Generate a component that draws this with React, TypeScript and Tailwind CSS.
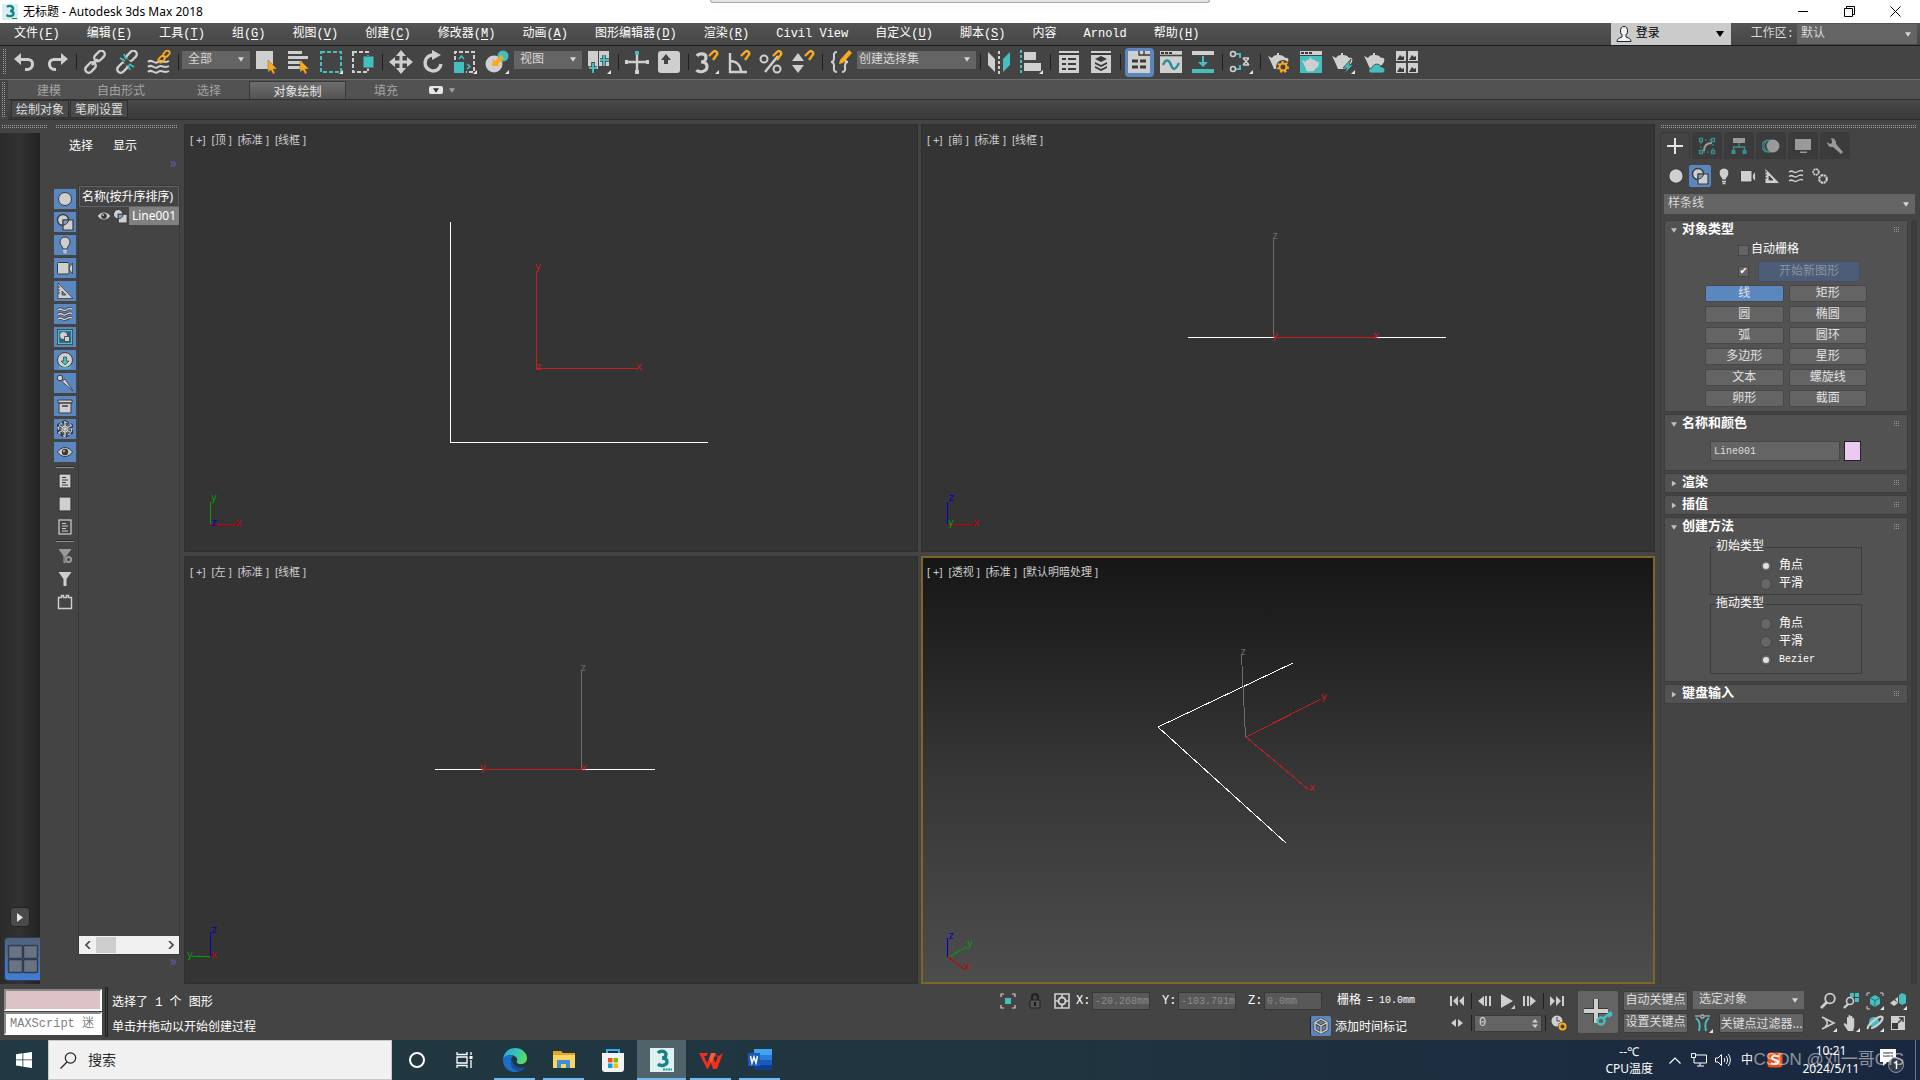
import type { ReactNode } from 'react'
import clsx from 'clsx'

const G = '#cfcfcf'
const T = '#43bfc0'
const O = '#fbaa1e'
const D = '#3a3a3a'

type IconProps = { children: ReactNode; className?: string; box?: string }

const Svg = ({ children, className = 'size-6', box = '0 0 24 24' }: IconProps) => (
  <svg viewBox={box} className={clsx('shrink-0', className)} fill="none" aria-hidden="true">
    {children}
  </svg>
)

const Corner = () => <path d="M24 20v4h-4z" fill="#e8e8e8" />
const Cursor = () => (
  <path d="M13 10v12l3-2 2 4 2-1-2-4h4z" fill={O} stroke="#6b5220" strokeWidth=".4" />
)
const Magnet = ({ x = 0 }: { x?: number }) => (
  <path
    transform={`translate(${x} 0)`}
    d="M13 6l4-4c2-2 5 0 4 2.5L17 10"
    stroke={O}
    strokeWidth="2.4"
  />
)
const Teapot = ({ fill = G }: { fill?: string }) => (
  <path
    d="M1 6l4 2c1-2 3-3 5-3V3h2v2c3 0 5 1 6 3 3-1 4 1 3 4-1 2-2 3-4 4l-2 3H7L4 12z"
    fill={fill}
  />
)
const Chain = ({ cut = false }: { cut?: boolean }) => (
  <g stroke={G} strokeWidth="2.4">
    <rect x="10.5" y="2.5" width="12" height="7" rx="3.5" transform="rotate(-45 16.5 6)" />
    <rect x="1.5" y="14" width="12" height="7" rx="3.5" transform="rotate(-45 7.5 17.5)" />
    {cut ? (
      <>
        <path d="M6 6l12 12" stroke="#444" strokeWidth="5" />
        <path d="M5 8l5 3M9 4l2 5M14 14l5 3M13 15l2 5" stroke={T} strokeWidth="1.8" />
      </>
    ) : (
      <path d="M9 15l6-6" />
    )}
  </g>
)

const UndoIcon = () => (
  <Svg>
    <path d="M8 3v5h6c4 0 7 2 7 6s-3 7-7 7h-2v-3h2c2 0 4-1 4-4s-2-3-4-3H8v4L1 9z" fill={G} />
  </Svg>
)
const RedoIcon = () => (
  <Svg>
    <path d="M16 3v5h-6c-4 0-7 2-7 6s3 7 7 7h1v-3h-1c-2 0-4-1-4-4s2-3 4-3h6v4l7-6z" fill={G} />
  </Svg>
)
const BindIcon = () => (
  <Svg>
    <path
      d="M1 12c4-4 6 3 10 0s6 2 11-1M1 17c4-4 6 3 10 0s6 2 11-1M1 22c4-4 6 3 10 0s6 2 11-1"
      stroke={G}
      strokeWidth="2"
    />
    <g stroke={O} strokeWidth="1.8">
      <rect x="16" y="1.5" width="7" height="4.5" rx="2.2" transform="rotate(-45 19.5 3.7)" />
      <rect x="11" y="7" width="7" height="4.5" rx="2.2" transform="rotate(-45 14.5 9.2)" />
    </g>
  </Svg>
)
const SelectIcon = () => (
  <Svg>
    <rect x="1" y="1" width="17" height="18" fill={G} />
    <Cursor />
  </Svg>
)
const SelectNameIcon = () => (
  <Svg>
    <path d="M1 1h14v3H1zM1 6h20v3H1zM1 11h14v3H1zM1 16h12v3H1z" fill={G} />
    <Cursor />
  </Svg>
)
const RectRegionIcon = () => (
  <Svg>
    <rect x="2" y="2" width="20" height="20" stroke={T} strokeWidth="2" strokeDasharray="4 2" />
    <Corner />
  </Svg>
)
const WindowCrossIcon = () => (
  <Svg>
    <rect x="2" y="2" width="15" height="20" stroke={G} strokeWidth="2" strokeDasharray="4 2" />
    <rect x="12" y="6" width="11" height="12" fill={T} stroke="#444" />
  </Svg>
)
const MoveIcon = () => (
  <Svg>
    <path
      d="M12 0l5 6h-3.500v4.500H18V7l6 5-6 5v-3.500h-4.500V18H17l-5 6-5-6h3.500v-4.500H6V17l-6-5 6-5v3.500h4.500V6H7z"
      fill={G}
    />
  </Svg>
)
const RotateIcon = () => (
  <Svg>
    <path d="M13 5a8 8 0 1 0 7 9" stroke={G} strokeWidth="3.400" />
    <path d="M11 0l9 5-9 5z" fill={G} />
  </Svg>
)
const ScaleIcon = () => (
  <Svg>
    <path d="M2 10V2h19v20h-8" stroke={G} strokeWidth="2" strokeDasharray="4 2" />
    <rect x="1" y="12" width="10" height="11" fill={T} />
    <path d="M6 9l2.500-3L11 9M14 14l3 2.500-3 2.500" stroke={T} strokeWidth="1.6" />
    <Corner />
  </Svg>
)
const PlaceIcon = () => (
  <Svg>
    <circle cx="9" cy="14" r="8.500" fill={G} />
    <circle cx="18" cy="6" r="5.500" fill={T} />
    <path d="M7 16l1-7 2 2 6-6 3 3-6 6 1 2z" fill={O} />
    <Corner />
  </Svg>
)
const PivotIcon = () => (
  <Svg>
    <path d="M1 1h10v18H1zM12 1h10v15H12z" fill={G} />
    <path d="M6 12v11M1 18h9M17 5v11M13 10h9" stroke="#444" strokeWidth="3.600" />
    <path d="M6 13v10M2 18h8M17 5v11M13 10h9" stroke={T} strokeWidth="2" />
    <Corner />
  </Svg>
)
const ManipIcon = () => (
  <Svg>
    <path d="M12 5v17M1 12h22" stroke={G} strokeWidth="2.400" />
    <path d="M10 20h4v4h-4zM0 10h3v4H0zM21 10h3v4h-3z" fill={G} />
    <path d="M10 1h4v4h-4z" fill={T} />
  </Svg>
)
const KeyOverrideIcon = () => (
  <Svg>
    <rect x="1" y="1" width="22" height="22" rx="3" fill={G} />
    <path d="M9 4l5 6h-3v4H7v-4H4z" fill="#444" />
  </Svg>
)
const SnapIcon = () => (
  <Svg>
    <path
      d="M2 6c2-3 9-3 9 1.500C11 10 9 12 6 12c3 0 6 1 6 4.500C12 22 4 23 1.500 20"
      stroke={G}
      strokeWidth="3.200"
    />
    <Magnet x={1} />
    <Corner />
  </Svg>
)
const AngleSnapIcon = () => (
  <Svg>
    <path d="M3 3v19h17M3 11c7 0 11 5 11 11" stroke={G} strokeWidth="2.400" />
    <Magnet x={1} />
  </Svg>
)
const PercentSnapIcon = () => (
  <Svg>
    <circle cx="5" cy="9" r="3.500" stroke={G} strokeWidth="2" />
    <circle cx="18" cy="19" r="3.500" stroke={G} strokeWidth="2" />
    <path d="M19 6L6 22" stroke={G} strokeWidth="2.400" />
    <Magnet x={1} />
  </Svg>
)
const SpinnerSnapIcon = () => (
  <Svg>
    <path d="M7 3l6 8H1zM7 23l6-8H1z" fill={G} />
    <Magnet x={1} />
  </Svg>
)
const SetsIcon = () => (
  <Svg>
    <path
      d="M8 2C4 2 5 5 5 8s-1 4-3 4c2 0 3 1 3 4s-1 6 3 6M13 22c4 0 3-3 3-6s1-4 3-4c-2 0-3-1-3-3"
      stroke={G}
      strokeWidth="2"
    />
    <path d="M20 0l3 3-9 10-4 1 1-4z" fill={O} />
  </Svg>
)
const MirrorIcon = () => (
  <Svg>
    <path d="M1 2l7 7v13l-7-7z" fill={G} />
    <path d="M12 1v23" stroke={G} strokeWidth="2" strokeDasharray="3 2" />
    <path d="M23 2l-7 7v13l7-7z" fill={T} />
  </Svg>
)
const AlignIcon = () => (
  <Svg>
    <path d="M2 0v24" stroke={T} strokeWidth="2" strokeDasharray="3 2" />
    <path d="M5 2h12v8H5zM5 13h17v8H5z" fill={G} />
    <Corner />
  </Svg>
)
const SceneListIcon = () => (
  <Svg>
    <path d="M2 1h20v22H2z" fill={G} />
    <path d="M2 4h20M5 9h4M5 14h4M5 19h4M11 9h8M11 14h8M11 19h8" stroke={D} strokeWidth="2" />
  </Svg>
)
const LayersIcon = () => (
  <Svg>
    <path d="M2 1h20v22H2z" fill={G} />
    <path d="M2 4h20" stroke={D} strokeWidth="2" />
    <path d="M12 6l6 3-6 3-6-3zM6 12l6 3 6-3v2l-6 3-6-3zM6 16l6 3 6-3v2l-6 3-6-3z" fill={D} />
  </Svg>
)
const RibbonIcon = () => (
  <Svg>
    <path d="M1 1h22v22H1z" fill={G} />
    <path d="M12 1v4h11M17 1v4" stroke={D} strokeWidth="1.4" />
    <path d="M5 11h6M13 11h6M5 17h6M13 17h6" stroke={D} strokeWidth="3" />
  </Svg>
)
const CurveIcon = () => (
  <Svg>
    <path d="M1 1h22v22H1z" fill={G} />
    <path d="M1 5.500h22" stroke="#444" strokeWidth="1.6" />
    <path d="M2 2h3v2H2zM6 2h3v2H6zM10 2h3v2h-3z" fill={D} />
    <path d="M4 15c3-7 6-5 8 0s4 6 8-2" stroke="#2d8f92" strokeWidth="2.400" />
  </Svg>
)
const SchematicIcon = () => (
  <Svg>
    <path d="M1 1h22v4H1z" fill={G} />
    <path d="M1 19h22v4H1zM11 6h2v6h4l-5 5-5-5h4z" fill={T} />
  </Svg>
)
const SlateIcon = () => (
  <Svg>
    <g stroke={G} strokeWidth="1.600">
      <circle cx="4" cy="4" r="2.500" />
      <circle cx="4" cy="19" r="2.500" />
      <path d="M14 8l6 7M20 8l-6 7M14 8h6M14 15h6" />
    </g>
    <path d="M7 4h4v4M7 19h4v-4" stroke={T} strokeWidth="2" />
    <Corner />
  </Svg>
)
const Gear = ({ x, y, r = 4, c = O }: { x: number; y: number; r?: number; c?: string }) => (
  <>
    <circle cx={x} cy={y} r={r} stroke={c} strokeWidth="2" />
    <circle cx={x} cy={y} r={r + 1.5} stroke={c} strokeWidth="2" strokeDasharray="2 2.300" />
  </>
)
const RenderSetupIcon = () => (
  <Svg>
    <Teapot />
    <circle cx="16" cy="17" r="7" fill="#444" />
    <Gear x={16} y={17} r={3.5} />
  </Svg>
)
const RenderFrameIcon = () => (
  <Svg>
    <path d="M1 1h22v4H1z" fill={G} />
    <path d="M2 2h3v2H2zM6 2h3v2H6zM10 2h3v2h-3z" fill={D} />
    <path d="M1 6h22v17H1z" fill={T} />
    <g transform="translate(2 5) scale(.85)">
      <Teapot />
    </g>
  </Svg>
)
const RenderIcon = () => (
  <Svg>
    <Teapot />
    <path d="M20 9l-8 9h4l-3 6 9-9h-4z" fill={T} stroke="#444" strokeWidth=".8" />
    <Corner />
  </Svg>
)
const CloudRenderIcon = () => (
  <Svg>
    <Teapot />
    <path d="M8 23c-3 0-3-5 1-5 1-5 8-5 9-1 5 0 5 6 1 6z" fill={T} stroke="#444" strokeWidth=".8" />
  </Svg>
)
const GalleryIcon = () => (
  <Svg>
    <path d="M1 1h10v10H1zM13 1h10v10H13zM1 13h10v10H1zM13 13h10v10H13z" fill={G} />
    <path
      d="M2 10l3-5 2 2 2-1v4zM14 10l3-5 2 2 2-1v4zM2 22l3-5 2 2 2-1v4zM14 22l3-5 2 2 2-1v4z"
      fill={D}
    />
  </Svg>
)

// object category icons, shared by the explorer rail and the command panel
const SphereIcon = ({ s = 'size-[18px]' }) => (
  <Svg className={s} box="0 0 18 18">
    <circle cx="9" cy="9" r="6.500" fill={G} stroke={D} />
  </Svg>
)
const ShapesIcon = ({ s = 'size-[18px]' }) => (
  <Svg className={s} box="0 0 18 18">
    <circle cx="7" cy="7" r="5.500" fill={G} stroke={D} strokeWidth="1.400" />
    <path d="M7 7h10v10H7z" fill={G} stroke={D} strokeWidth="1.200" />
    <path d="M7 12V7h5.500A5.500 5.500 0 0 1 7 12z" fill="#7f9cc8" stroke={D} />
  </Svg>
)
const BulbIcon = ({ s = 'size-[18px]' }) => (
  <Svg className={s} box="0 0 18 18">
    <path d="M9 1a5 5 0 0 0-5 5c0 3 2.500 4 3 7h4c.5-3 3-4 3-7a5 5 0 0 0-5-5z" fill={G} stroke={D} />
    <path d="M7 14.500h4M7.500 16.500h3" stroke={G} strokeWidth="1.400" />
  </Svg>
)
const CameraIcon = ({ s = 'size-[18px]' }) => (
  <Svg className={s} box="0 0 18 18">
    <rect x="1.500" y="3.500" width="11.500" height="11.500" rx="1" fill={G} stroke={D} />
    <path d="M13.500 8l3-4v11l-3-4z" fill={G} stroke={D} strokeWidth=".8" />
  </Svg>
)
const RulerIcon = ({ s = 'size-[18px]' }) => (
  <Svg className={s} box="0 0 18 18">
    <path d="M2 1l15 15.500H2zM6 9v4h4z" fill={G} stroke={D} strokeWidth=".8" fillRule="evenodd" />
    <path d="M2 5h2M2 8h2M2 11h2" stroke={D} />
  </Svg>
)
const WavesIcon = ({ s = 'size-[18px]' }) => (
  <Svg className={s} box="0 0 18 18">
    <path
      d="M2 5c4-3 5 2 8 0s4-2 6-1M2 9.500c4-3 5 2 8 0s4-2 6-1M2 14c4-3 5 2 8 0s4-2 6-1"
      stroke={D}
      strokeWidth="3"
    />
    <path
      d="M2 5c4-3 5 2 8 0s4-2 6-1M2 9.500c4-3 5 2 8 0s4-2 6-1M2 14c4-3 5 2 8 0s4-2 6-1"
      stroke={G}
      strokeWidth="1.500"
    />
  </Svg>
)
const GroupIcon = () => (
  <Svg className="size-[18px]" box="0 0 18 18">
    <rect x="1.500" y="1.500" width="15" height="15" fill="#3f5c80" stroke={D} />
    <rect x="2.500" y="2.500" width="13" height="13" stroke={T} strokeWidth="1.400" />
    <circle cx="7.500" cy="7.500" r="3.500" fill={G} />
    <path d="M8.500 8.500h5v5h-5z" fill={G} stroke={D} strokeWidth=".8" />
  </Svg>
)
const XrefIcon = () => (
  <Svg className="size-[18px]" box="0 0 18 18">
    <circle cx="9" cy="9" r="7.500" fill={G} stroke={D} />
    <path d="M7.500 6h3v4h2.500l-4 4-4-4h2.500z" fill={T} stroke={D} strokeWidth=".7" />
    <path d="M4 15v2h10v-2" stroke={T} strokeWidth="1.400" />
  </Svg>
)
const BoneIcon = () => (
  <Svg className="size-[18px]" box="0 0 18 18">
    <circle cx="4" cy="4" r="2.800" fill={G} stroke={D} />
    <path d="M6 7.500L9 5l8 12z" fill={G} stroke={D} strokeWidth=".8" />
  </Svg>
)
const ContainerIcon = () => (
  <Svg className="size-[18px]" box="0 0 18 18">
    <path d="M2 3h14v3h-1v10H3V6H2z" fill={G} stroke={D} />
    <path d="M3 6h12M6 9h6" stroke={D} strokeWidth="1.600" />
  </Svg>
)
const FrozenIcon = () => (
  <Svg className="size-[18px]" box="0 0 18 18">
    <path d="M9 1.500l6.500 3.700v7.600L9 16.500l-6.500-3.700V5.200z" stroke={D} strokeWidth="3" strokeDasharray="4 2" />
    <path d="M9 2v14M3 5.500l12 7M15 5.500l-12 7" stroke={D} strokeWidth="3" />
    <path d="M9 2v14M3 5.500l12 7M15 5.500l-12 7" stroke={G} strokeWidth="1.400" />
    <path d="M9 1.500l6.500 3.700v7.600L9 16.500l-6.500-3.700V5.200z" stroke={G} strokeDasharray="3 2.500" />
    <circle cx="9" cy="9" r="3" stroke={G} />
  </Svg>
)
const EyeIcon = ({ s = 'size-[18px]' }) => (
  <Svg className={s} box="0 0 18 18">
    <path d="M1.500 9c4-6 11-6 15 0-4 6-11 6-15 0z" fill={G} stroke={D} />
    <circle cx="9" cy="9" r="3.200" fill={D} />
    <circle cx="8" cy="8" r="1" fill={G} />
  </Svg>
)
const PageIcon = ({ kind }: { kind: 'all' | 'none' | 'invert' }) => (
  <Svg className="size-[18px]" box="0 0 18 18">
    <rect
      x="3"
      y="2"
      width="12"
      height="14"
      fill={kind === 'invert' ? '#444' : G}
      stroke={kind === 'invert' ? G : D}
      strokeWidth="1.200"
    />
    {kind !== 'none' && (
      <path
        d="M6 5.500h4M6 8h6M6 10.500h4M6 13h6"
        stroke={kind === 'invert' ? G : D}
        strokeWidth="1.200"
      />
    )}
  </Svg>
)
const FilterIcon = ({ dim = false }) => (
  <Svg className="size-[18px]" box="0 0 18 18">
    <path d="M2.500 2h13L10.500 9v7h-3V9z" fill={dim ? '#9a9a9a' : G} />
    {dim && (
      <g>
        <circle cx="12.500" cy="12.500" r="4" fill="#444" />
        <circle cx="12.500" cy="12.500" r="2.600" stroke="#9a9a9a" strokeWidth="2" />
      </g>
    )}
  </Svg>
)
const BrickIcon = () => (
  <Svg className="size-[18px]" box="0 0 18 18">
    <path d="M2.500 15.500v-11h3v-2h2v2h3v-2h2v2h3v11z" stroke={G} strokeWidth="1.400" />
  </Svg>
)
const SystemsIcon = () => (
  <Svg className="size-[18px]" box="0 0 18 18">
    <circle cx="5" cy="5" r="2.800" stroke={G} strokeWidth="1.800" strokeDasharray="2 .6" />
    <circle cx="12" cy="12" r="3.800" stroke={G} strokeWidth="2.200" strokeDasharray="2.400 .6" />
  </Svg>
)

const Underlined = ({ label, hot }: { label: string; hot: string }) => (
  <>
    {label}
    {hot && (
      <>
        (<u className="underline-offset-2">{hot}</u>)
      </>
    )}
  </>
)

const Grip = ({ className = '' }: { className?: string }) => (
  <div className={clsx('flex flex-col gap-px', className)}>
    <div className="h-px bg-[linear-gradient(90deg,#a0a0a0_50%,transparent_50%)] bg-[length:2px_1px]" />
    <div className="h-px bg-[linear-gradient(90deg,#a0a0a0_50%,transparent_50%)] bg-[length:2px_1px]" />
  </div>
)
const VGrip = ({ className = '' }: { className?: string }) => (
  <div className={clsx('flex gap-px', className)}>
    <div className="w-px bg-[linear-gradient(#a0a0a0_50%,transparent_50%)] bg-[length:1px_2px]" />
    <div className="w-px bg-[linear-gradient(#a0a0a0_50%,transparent_50%)] bg-[length:1px_2px]" />
  </div>
)

const Arrow = ({ className = 'text-[#d6d6d6]' }: { className?: string }) => (
  <svg viewBox="0 0 8 6" className={clsx('h-[5px] w-[6px] shrink-0', className)} aria-hidden="true">
    <path d="M0 0h8L4 6z" fill="currentColor" />
  </svg>
)

type ComboProps = { label: string; value: string; className?: string; pad?: string }
const Combo = ({ label, value, className, pad = 'pl-[6px]' }: ComboProps) => (
  <div className={clsx('relative flex items-center bg-[#646464] text-[#d8d8d8]', className)}>
    <select
      aria-label={label}
      className={clsx('size-full appearance-none text-xs leading-[16px] outline-none', pad)}
    >
      <option>{value}</option>
    </select>
    <div className="pointer-events-none absolute inset-y-0 right-[6px] flex items-center">
      <Arrow />
    </div>
  </div>
)

const TitleBar = () => (
  <header className="relative flex h-[23px] items-center bg-white pl-[2px] font-['Noto_Sans','Noto_Sans_CJK_SC',sans-serif] text-xs text-black">
    <Svg className="size-4" box="0 0 16 16">
      <rect width="16" height="16" fill="#d9eeee" />
      <path d="M5 3c2-2 6-1 6 1.500S9 7 8 7c2 0 3.500 1 3.500 3S7 13 4.500 11" stroke="#16868c" strokeWidth="2.400" />
      <path d="M10 14.500h5" stroke="#16868c" />
    </Svg>
    <h1 className="ml-[5px]">无标题 - Autodesk 3ds Max 2018</h1>
    <div className="absolute top-0 left-[37%] h-[3px] w-[26%] rounded-b-sm border-x border-b border-[#a8a8a8] bg-[#e4e4e4] shadow-md" />
    <div className="ml-auto flex h-full items-center">
      <button aria-label="最小化" className="flex w-12 justify-center">
        <Svg className="size-[11px]" box="0 0 11 11">
          <path d="M0 5.500h10" stroke="#000" />
        </Svg>
      </button>
      <button aria-label="还原" className="flex w-[44px] justify-center">
        <Svg className="size-[11px]" box="0 0 11 11">
          <path d="M.5 2.500h8v8h-8zM2.500 2.500v-2h8v8h-2" stroke="#000" />
        </Svg>
      </button>
      <button aria-label="关闭" className="mr-px flex w-12 justify-center">
        <Svg className="size-[11px]" box="0 0 11 11">
          <path d="M.5.5l10 10M10.500.5l-10 10" stroke="#000" />
        </Svg>
      </button>
    </div>
  </header>
)

const menus: [string, string][] = [
  ['文件', 'F'],
  ['编辑', 'E'],
  ['工具', 'T'],
  ['组', 'G'],
  ['视图', 'V'],
  ['创建', 'C'],
  ['修改器', 'M'],
  ['动画', 'A'],
  ['图形编辑器', 'D'],
  ['渲染', 'R'],
  ['Civil View', ''],
  ['自定义', 'U'],
  ['脚本', 'S'],
  ['内容', ''],
  ['Arnold', ''],
  ['帮助', 'H'],
]

const MenuBar = () => (
  <nav className="flex h-[23px] items-center border-b border-[#1a1a1a] bg-linear-to-b from-[#545454] to-[#464646] pl-[14px] text-xs text-white">
    <div className="flex gap-[27px] whitespace-nowrap">
      {menus.map(([label, hot]) => (
        <button key={label}>
          <Underlined label={label} hot={hot} />
        </button>
      ))}
    </div>
    <button className="ml-auto flex h-full w-[120px] items-center bg-[#cbcbcb] pr-[6px] pl-[5px] text-black">
      <Svg className="size-4" box="0 0 16 16">
        <ellipse cx="8" cy="5" rx="3.500" ry="4.500" fill="#eef3fa" stroke="#222" />
        <path d="M6 9v2c-3 1-5 2-5 4.500h14C15 13 13 12 10 11V9" fill="#eef3fa" stroke="#222" />
      </Svg>
      <span className="ml-1">登录</span>
      <Arrow className="ml-auto h-[6px] w-[10px] text-black" />
    </button>
    <label className="ml-5 flex h-full items-center gap-[3px] text-[#d8d8d8]">
      <span>工作区:</span>
      <Combo label="工作区" value="默认" className="mr-[3px] h-5 w-[120px]" pad="pl-1" />
    </label>
  </nav>
)

const Tool = ({ label, icon, on = false }: { label: string; icon: ReactNode; on?: boolean }) => (
  <button aria-label={label} className="flex h-8 w-8 items-center justify-center">
    <span
      className={clsx(
        'flex h-[29px] w-[29px] items-center justify-center rounded',
        on && 'bg-[#5b87c0]',
      )}
    >
      {icon}
    </span>
  </button>
)
const SepCell = () => (
  <div className="flex w-[6px] shrink-0">
    <div className="mx-auto h-4 w-px shrink-0 bg-[#1e1e1e]" />
  </div>
)

const Toolbar = () => (
  <div className="flex h-[34px] items-center border-b border-[#6c6c6c] bg-[#444] pb-px text-[#ddd]">
    <VGrip className="mr-[3px] ml-[3px] h-[26px]" />
    <Tool label="撤消" icon={<UndoIcon />} />
    <Tool label="重做" icon={<RedoIcon />} />
    <SepCell />
    <Tool label="链接" icon={<Svg><Chain /></Svg>} />
    <Tool label="取消链接" icon={<Svg><Chain cut /></Svg>} />
    <Tool label="绑定到空间扭曲" icon={<BindIcon />} />
    <SepCell />
    <Combo label="选择过滤器" value="全部" className="mx-px mb-[5px] h-[18px] w-[68px]" />
    <Tool label="选择对象" icon={<SelectIcon />} />
    <Tool label="按名称选择" icon={<SelectNameIcon />} />
    <Tool label="矩形选择区域" icon={<RectRegionIcon />} />
    <Tool label="窗口/交叉" icon={<WindowCrossIcon />} />
    <SepCell />
    <Tool label="移动" icon={<MoveIcon />} />
    <Tool label="旋转" icon={<RotateIcon />} />
    <Tool label="缩放" icon={<ScaleIcon />} />
    <Tool label="放置" icon={<PlaceIcon />} />
    <Combo label="参考坐标系" value="视图" className="mx-px mb-[5px] h-[18px] w-[68px]" />
    <Tool label="使用轴点中心" icon={<PivotIcon />} />
    <SepCell />
    <Tool label="选择并操纵" icon={<ManipIcon />} />
    <Tool label="键盘快捷键覆盖" icon={<KeyOverrideIcon />} />
    <SepCell />
    <Tool label="捕捉开关" icon={<SnapIcon />} />
    <Tool label="角度捕捉" icon={<AngleSnapIcon />} />
    <Tool label="百分比捕捉" icon={<PercentSnapIcon />} />
    <Tool label="微调器捕捉" icon={<SpinnerSnapIcon />} />
    <SepCell />
    <Tool label="编辑命名选择集" icon={<SetsIcon />} />
    <Combo label="创建选择集" value="创建选择集" className="mr-px mb-[5px] h-[18px] w-[119px]" pad="pl-[2px]" />
    <SepCell />
    <Tool label="镜像" icon={<MirrorIcon />} />
    <Tool label="对齐" icon={<AlignIcon />} />
    <SepCell />
    <Tool label="场景资源管理器" icon={<SceneListIcon />} />
    <Tool label="层资源管理器" icon={<LayersIcon />} />
    <SepCell />
    <Tool label="功能区" icon={<RibbonIcon />} on />
    <Tool label="曲线编辑器" icon={<CurveIcon />} />
    <Tool label="图解视图" icon={<SchematicIcon />} />
    <SepCell />
    <Tool label="材质编辑器" icon={<SlateIcon />} />
    <SepCell />
    <Tool label="渲染设置" icon={<RenderSetupIcon />} />
    <Tool label="渲染帧窗口" icon={<RenderFrameIcon />} />
    <Tool label="渲染产品" icon={<RenderIcon />} />
    <Tool label="云渲染" icon={<CloudRenderIcon />} />
    <Tool label="渲染库" icon={<GalleryIcon />} />
  </div>
)

const Ribbon = () => (
  <div className="flex h-10 bg-[#444] font-['Noto_Sans_CJK_SC',sans-serif] text-xs">
    <VGrip className="my-[2px] mr-[3px] ml-[2px]" />
    <div className="flex grow flex-col">
      <div className="flex h-5 items-end border-b border-[#2e2e2e] bg-[#525252] text-[#a2a2a2]">
        <button className="ml-[29px] h-[18px] w-6">建模</button>
        <button className="ml-[36px] h-[18px] w-12">自由形式</button>
        <button className="ml-[52px] h-[18px] w-6">选择</button>
        <button className="ml-[28px] h-[18px] w-[97px] border-x border-t border-[#383838] bg-linear-to-b from-[#6d6d6d] to-[#545454] text-[#e6e6e6]">
          对象绘制
        </button>
        <button className="ml-[28px] h-[18px] w-6">填充</button>
        <button aria-label="功能区显示" className="ml-[31px] flex h-[18px] items-center gap-[6px]">
          <span className="flex h-2 w-[14px] items-center justify-center rounded-xs bg-[#e6e6e6]">
            <Arrow className="text-[#333]" />
          </span>
          <Arrow className="h-1 w-[5px]" />
        </button>
      </div>
      <div className="flex h-5 gap-px border-b border-[#2e2e2e] bg-linear-to-b from-[#494949] to-[#393939] text-[#dedede]">
        <button className="ml-[3px] h-[18px] w-[58px] border border-[#2f2f2f] bg-[#4a4a4a] leading-[16px]">
          绘制对象
        </button>
        <button className="h-[18px] w-[58px] border border-[#2f2f2f] bg-[#4a4a4a] leading-[16px]">
          笔刷设置
        </button>
      </div>
    </div>
  </div>
)

const railFilters: [string, ReactNode][] = [
  ['几何体', <SphereIcon />],
  ['图形', <ShapesIcon />],
  ['灯光', <BulbIcon />],
  ['摄影机', <CameraIcon />],
  ['辅助对象', <RulerIcon />],
  ['空间扭曲', <WavesIcon />],
  ['组', <GroupIcon />],
  ['外部参照', <XrefIcon />],
  ['骨骼', <BoneIcon />],
  ['容器', <ContainerIcon />],
  ['冻结对象', <FrozenIcon />],
  ['隐藏对象', <EyeIcon />],
]

const RailSep = () => <div className="h-[2px] w-[18px] border-t border-[#2c2c2c] bg-[#8a8a8a]" />
const RailButton = ({ label, children }: { label: string; children: ReactNode }) => (
  <button aria-label={label} className="flex h-[23px] items-center">
    {children}
  </button>
)

const SceneExplorer = () => (
  <aside className="flex w-[184px] shrink-0 flex-col bg-[#444] text-xs text-white">
    <div className="flex h-[13px] items-center gap-[9px] pl-[2px]">
      <Grip className="w-[45px]" />
      <Grip className="w-[121px]" />
    </div>
    <div className="flex grow">
      <div className="flex w-10 flex-col bg-linear-to-r from-[#2b2b2b] via-[#323232] to-[#222]">
        <button
          aria-label="播放"
          className="mt-auto ml-[10px] flex size-5 items-center justify-center rounded border border-[#222] bg-[#4a4a4a]"
        >
          <Svg className="h-[9px] w-[6px]" box="0 0 6 9">
            <path d="M0 0l6 4.500L0 9z" fill="#e4e4e4" />
          </Svg>
        </button>
        <button
          aria-label="视口布局"
          className="mt-[10px] mb-[3px] ml-1 flex h-11 items-center justify-center rounded-l border border-r-0 border-[#2c3b52] bg-linear-to-b from-[#52617a] to-[#3f7fd4]"
        >
          <Svg className="size-8" box="0 0 32 32">
            <g fill="#697381" stroke="#2c3d54" strokeWidth="1.400">
              <rect x="1.500" y="2.500" width="14" height="13" rx="1" />
              <rect x="16.500" y="2.500" width="14" height="13" rx="1" />
              <rect x="1.500" y="16.500" width="14" height="13" rx="1" />
              <rect x="16.500" y="16.500" width="14" height="13" rx="1" />
            </g>
          </Svg>
        </button>
      </div>
      <div className="flex grow flex-col font-['Noto_Sans','Noto_Sans_CJK_SC',sans-serif]">
        <div className="flex h-6 items-center gap-5 pl-[29px] font-['Noto_Sans_CJK_SC',sans-serif]">
          <button>选择</button>
          <button>显示</button>
        </div>
        <div className="h-7 pr-[7px] text-right text-sm leading-[12px] text-[#5a5ab4]">»</div>
        <div className="flex grow">
          <div className="flex w-[38px] shrink-0 flex-col items-center pt-1 pl-[12px]">
            <div className="flex flex-col gap-[3px]">
              {railFilters.map(([label, icon]) => (
                <button
                  key={label}
                  aria-label={label}
                  className="flex h-5 w-[22px] items-center justify-center bg-[#5b87c0]"
                >
                  {icon}
                </button>
              ))}
            </div>
            <div className="mt-1 flex flex-col items-center">
              <RailSep />
              <div className="h-px" />
              <RailButton label="全部"><PageIcon kind="all" /></RailButton>
              <RailButton label="无"><PageIcon kind="none" /></RailButton>
              <RailButton label="反转"><PageIcon kind="invert" /></RailButton>
              <div className="h-[2px]" />
              <RailSep />
              <div className="h-[2px]" />
              <RailButton label="配置高级过滤器"><FilterIcon dim /></RailButton>
              <RailButton label="过滤器"><FilterIcon /></RailButton>
              <RailButton label="锁定"><BrickIcon /></RailButton>
            </div>
          </div>
          <div className="mr-1 flex grow flex-col border border-[#383838]">
            <div className="h-[21px] truncate border border-[#626262] pl-[2px] leading-[19px]">
              名称(按升序排序)
            </div>
            <div className="flex h-[18px] items-center pl-[17px]">
              <EyeIcon s="size-4" />
              <ShapesIcon s="size-4" />
              <span className="ml-auto flex h-full w-[50px] items-center justify-center bg-[#808080]">
                Line001
              </span>
            </div>
            <div className="mt-auto flex h-[18px] items-center bg-[#f0f0f0] text-[#404040]">
              <button aria-label="向左滚动" className="flex w-[17px] justify-center">
                <Svg className="h-2 w-[6px]" box="0 0 6 8">
                  <path d="M5 0L1 4l4 4" stroke="#444" strokeWidth="1.600" />
                </Svg>
              </button>
              <div className="h-4 w-5 bg-[#cdcdcd]" />
              <button aria-label="向右滚动" className="ml-auto flex w-[17px] justify-center">
                <Svg className="h-2 w-[6px]" box="0 0 6 8">
                  <path d="M1 0l4 4-4 4" stroke="#444" strokeWidth="1.600" />
                </Svg>
              </button>
            </div>
          </div>
        </div>
        <div className="h-[29px] pr-[7px] text-right text-sm leading-[11px] text-[#5a5ab4]">»</div>
      </div>
    </div>
  </aside>
)

const RED = '#c22020'
const AXIS = { x: '#c80000', y: '#00a000', z: '#0000c8' }

type Letter = [string, number, number, string]
type Line = [string, string]
type ViewportProps = { tags: string[]; lines: Line[]; letters: Letter[]; active?: boolean }

const Viewport = ({ tags, lines, letters, active = false }: ViewportProps) => (
  <section
    className={clsx(
      'relative min-h-[428px] overflow-hidden',
      active
        ? 'bg-linear-to-b from-[#161616] via-[#363636] to-[#4d4d4d] ring-2 ring-[#7d6628] ring-inset'
        : 'bg-[#343434] ring-1 ring-[#2f2f2f] ring-inset',
    )}
  >
    <div className="absolute top-2 left-[6px] flex gap-[6px] text-[11px] leading-[16px] whitespace-nowrap text-[#cdcdcd] font-['Liberation_Sans','Noto_Sans_CJK_SC',sans-serif]">
      {tags.map((tag) => (
        <button key={tag} className="whitespace-pre">
          [{tag}]
        </button>
      ))}
    </div>
    <svg
      viewBox="0 0 733 428"
      className="absolute inset-0 size-full"
      preserveAspectRatio="xMinYMin"
      fill="none"
      aria-hidden="true"
    >
      {lines.map(([d, stroke]) => (
        <path key={d} d={d} stroke={stroke} shapeRendering="crispEdges" />
      ))}
      {letters.map(([ch, x, y, fill]) => (
        <text
          key={`${ch}${x}${y}`}
          x={x}
          y={y + 3}
          fill={fill}
          textAnchor="middle"
          className="font-['DejaVu_Sans',sans-serif] text-[10px]"
        >
          {ch}
        </text>
      ))}
    </svg>
  </section>
)

const Viewports = () => (
  <main className="grid grow grid-cols-2 grid-rows-2 gap-x-[3px] gap-y-1 bg-[#444] pt-1">
    <Viewport
      tags={[' +', '顶 ', '标准 ', '线框 ']}
      lines={[
        ['M266.500 98V318.500H524', '#fff'],
        ['M352.500 147V244.500H453', RED],
        ['M26.500 378V400', AXIS.y],
        ['M27 400.500H52', AXIS.x],
      ]}
      letters={[
        ['y', 354, 143, RED],
        ['x', 455, 243, RED],
        ['z', 354, 243, RED],
        ['y', 30, 374, AXIS.y],
        ['x', 55, 399, AXIS.x],
        ['z', 30, 399, AXIS.z],
      ]}
    />
    <Viewport
      tags={[' +', '前 ', '标准 ', '线框 ']}
      lines={[
        ['M267 213.500H525', '#fff'],
        ['M352.500 114V213', '#6a6a6a'],
        ['M353 213.500H455', RED],
        ['M26.500 378V400', AXIS.z],
        ['M27 400.500H51', AXIS.x],
      ]}
      letters={[
        ['z', 354, 112, '#6a6a6a'],
        ['y', 354, 212, RED],
        ['x', 455, 212, RED],
        ['z', 30, 374, AXIS.z],
        ['y', 30, 399, AXIS.y],
        ['x', 55, 399, AXIS.x],
      ]}
    />
    <Viewport
      tags={[' +', '左 ', '标准 ', '线框 ']}
      lines={[
        ['M251 213.500H471', '#fff'],
        ['M397.500 115V213', '#6a6a6a'],
        ['M299 213.500H398', RED],
        ['M26.500 376V400', AXIS.z],
        ['M8 400.500H26', AXIS.y],
      ]}
      letters={[
        ['z', 399, 112, '#6a6a6a'],
        ['y', 299, 212, RED],
        ['x', 400, 212, RED],
        ['z', 30, 374, AXIS.z],
        ['y', 6, 399, AXIS.y],
        ['x', 30, 399, AXIS.x],
      ]}
    />
    <Viewport
      active
      tags={[' +', '透视 ', '标准 ', '默认明暗处理 ']}
      lines={[
        ['M372 107L237 171L365 287', '#fff'],
        ['M320.500 99L324.500 181', '#6e6e6e'],
        ['M325 181L400 143', RED],
        ['M325 181L388 234', RED],
        ['M26.500 382V401', AXIS.z],
        ['M27 401L46 391', AXIS.y],
        ['M27 401L43 413', AXIS.x],
      ]}
      letters={[
        ['z', 322, 96, '#6e6e6e'],
        ['y', 403, 141, RED],
        ['x', 391, 232, RED],
        ['z', 30, 380, AXIS.z],
        ['y', 49, 388, AXIS.y],
        ['x', 46, 411, AXIS.x],
      ]}
    />
  </main>
)

const panelTabs: [string, ReactNode][] = [
  ['创建', <path d="M9 1v16M1 9h16" stroke="#e6e6e6" strokeWidth="2" />],
  [
    '修改',
    <g>
      <path d="M3 3h12v12H3z" stroke="#3a8f90" strokeDasharray="2 2" />
      <path
        d="M1.500 1.500h3v3h-3zM13.500 1.500h3v3h-3zM1.500 13.500h3v3h-3zM13.500 13.500h3v3h-3z"
        stroke="#3a8f90"
        strokeWidth="1.300"
        fill="#3c3c3c"
      />
      <path d="M6 14c0-5 3-8 8-8" stroke="#9a9a9a" strokeWidth="2" />
    </g>,
  ],
  [
    '层次',
    <g>
      <path d="M3 1h12v5H3z" fill="#9a9a9a" />
      <path d="M9 6v4M3.500 14v-4h11v4" stroke="#3a8f90" strokeWidth="1.400" />
      <path d="M1.500 13h4v4h-4zM12.500 13h4v4h-4z" fill="#3a8f90" />
    </g>,
  ],
  [
    '运动',
    <g>
      <circle cx="6" cy="9" r="6" stroke="#3a8f90" strokeWidth="1.200" />
      <circle cx="8" cy="9" r="6" stroke="#3a8f90" strokeWidth="1.200" />
      <circle cx="11" cy="9" r="6.500" fill="#9a9a9a" />
    </g>,
  ],
  ['显示', <path d="M1 2h16v11H1zM6 14.500h7V16H6z" fill="#9a9a9a" />],
  [
    '实用程序',
    <path
      d="M5 1a5 5 0 0 1 5 6l7 8-2 2-8-7a5 5 0 0 1-6-5l3 2 2-1V4z"
      fill="#9a9a9a"
    />,
  ],
]

const categories: [string, ReactNode][] = [
  ['几何体', <SphereIcon s="size-5" />],
  ['图形', <ShapesIcon />],
  ['灯光', <BulbIcon />],
  ['摄影机', <CameraIcon />],
  ['辅助对象', <RulerIcon />],
  ['空间扭曲', <WavesIcon />],
  ['系统', <SystemsIcon />],
]

const objectTypes = [
  '线', '矩形', '圆', '椭圆', '弧', '圆环', '多边形', '星形', '文本', '螺旋线', '卵形', '截面',
]

const GripDots = () => (
  <Svg className="ml-auto size-[6px]" box="0 0 6 6">
    <path
      d="M0 .5h6M0 2.500h6M0 4.500h6"
      stroke="#969696"
      strokeDasharray="1 1"
      shapeRendering="crispEdges"
    />
  </Svg>
)

type RolloutProps = { title: string; children?: ReactNode; className?: string }
const Rollout = ({ title, children, className }: RolloutProps) => (
  <section className={clsx('rounded-xs border border-[#3e3e3e] bg-[#525252]', className)}>
    <button className="flex h-[18px] w-full items-center pr-[7px] pl-[6px] text-[13px] leading-[18px] font-bold text-white">
      <Arrow className={clsx('text-[#c0c0c0]', !children && '-rotate-90')} />
      <span className="ml-[5px]">{title}</span>
      <GripDots />
    </button>
    {children}
  </section>
)

type RadioProps = { name: string; label: string; checked?: boolean; small?: boolean }
const Radio = ({ name, label, checked = false, small = false }: RadioProps) => (
  <label className="flex h-[18px] items-center gap-2 pl-[50px]">
    <input
      type="radio"
      name={name}
      defaultChecked={checked}
      className="size-[10px] appearance-none rounded-full border-2 border-[#666] bg-[#666] outline outline-[#484848] checked:bg-[#e2e2e2]"
    />
    <span className={small ? 'text-[10px]' : 'text-xs'}>{label}</span>
  </label>
)

const checkClass =
  "flex size-[11px] shrink-0 appearance-none items-center justify-center border border-[#464646] bg-[#646464] text-[11px] leading-none text-white checked:before:content-['✔']"

const CommandPanel = () => (
  <aside className="flex w-[265px] shrink-0 flex-col bg-[#444] pt-[5px] pl-[5px] text-xs text-white">
    <Grip className="mr-[3px] ml-px" />
    <div className="mt-1 flex gap-[2px]">
      {panelTabs.map(([label, icon], i) => (
        <button
          key={label}
          aria-label={label}
          className={clsx(
            'flex h-[27px] w-[30px] items-center justify-center rounded-t border-t border-[#393939]',
            i === 0 ? 'border-x bg-[#444]' : 'bg-[#3b3b3b]',
          )}
        >
          <Svg className="size-[18px]" box="0 0 18 18">
            {icon}
          </Svg>
        </button>
      ))}
    </div>
    <div className="flex grow flex-col border-l border-[#393939] pt-[6px] pl-[3px]">
      <div className="ml-px flex gap-[2px]">
        {categories.map(([label, icon], i) => (
          <button
            key={label}
            aria-label={label}
            className={clsx(
              'flex size-[22px] items-center justify-center rounded-xs',
              i === 1 && 'bg-[#5b87c0]',
            )}
          >
            {icon}
          </button>
        ))}
      </div>
      <Combo label="对象类别" value="样条线" className="mt-[7px] mr-[5px] h-5" pad="pl-1" />
      <div className="mt-[6px] flex grow gap-[3px] pr-[3px]">
        <div className="flex grow flex-col gap-[2px]">
          <Rollout title="对象类型" className="pb-[4px]">
            <label className="mt-[2px] ml-[73px] flex h-[18px] items-center gap-[2px]">
              <input type="checkbox" className={checkClass} />
              自动栅格
            </label>
            <div className="ml-[73px] flex h-[24px] items-center gap-[9px]">
              <input
                type="checkbox"
                aria-label="开始新图形"
                defaultChecked
                className={checkClass}
              />
              <button
                disabled
                className="h-[21px] w-[102px] rounded-xs border border-[#454f5f] bg-[#4d5d77] leading-[20px] text-[#8b919b]"
              >
                开始新图形
              </button>
            </div>
            <div className="mx-auto mt-[2px] grid w-[162px] grid-cols-2 gap-x-[5px] gap-y-[4px]">
              {objectTypes.map((name, i) => (
                <button
                  key={name}
                  className={clsx(
                    'h-[17px] rounded-xs border border-[#484848] leading-[16px] text-[#e0e0e0]',
                    i === 0 ? 'bg-[#5b87c0]' : 'bg-[#646464]',
                  )}
                >
                  {name}
                </button>
              ))}
            </div>
          </Rollout>
          <Rollout title="名称和颜色" className="pb-[9px]">
            <div className="mx-auto mt-2 flex w-[152px] gap-1 pr-px">
              <input
                aria-label="对象名称"
                defaultValue="Line001"
                className="h-5 min-w-0 grow border border-[#474747] bg-[#646464] pl-[3px] text-[10px] text-[#ddd]"
              />
              <button
                aria-label="对象颜色"
                className="size-[17px] h-5 border border-[#222] bg-[#ecc9f2]"
              />
            </div>
          </Rollout>
          <Rollout title="渲染" />
          <Rollout title="插值" />
          <Rollout title="创建方法" className="pb-[7px]">
            <fieldset className="mx-auto mt-[2px] w-[152px] border border-[#3c3c3c] pt-px pb-px">
              <legend className="ml-1 px-px leading-[18px]">初始类型</legend>
              <Radio name="initial" label="角点" checked />
              <Radio name="initial" label="平滑" />
            </fieldset>
            <fieldset className="mx-auto w-[152px] border border-[#3c3c3c] pt-[2px] pb-1">
              <legend className="ml-1 px-px leading-[18px]">拖动类型</legend>
              <Radio name="drag" label="角点" />
              <Radio name="drag" label="平滑" />
              <Radio name="drag" label="Bezier" checked small />
            </fieldset>
          </Rollout>
          <Rollout title="键盘输入" />
        </div>
        <div className="w-[6px] rounded-t bg-[#3c3c3c]" />
      </div>
    </div>
  </aside>
)

const CoordField = ({ axis, value }: { axis: string; value: string }) => (
  <label className="flex items-center text-white">
    <span className="w-4">{axis}:</span>
    <input
      defaultValue={value}
      className="mr-3 h-[18px] w-[58px] border border-[#383838] bg-[#585858] pl-[2px] text-[10px] text-[#8c8c8c]"
    />
  </label>
)

const Cell = ({ label, children }: { label: string; children: ReactNode }) => (
  <button aria-label={label} className="flex h-5 w-[22px] items-center justify-center">
    {children}
  </button>
)
const Mini = ({ d, fill = G }: { d: string; fill?: string }) => (
  <Svg className="size-4" box="0 0 16 16">
    <path d={d} fill={fill} />
  </Svg>
)

const keyButton =
  'h-5 rounded-xs bg-[#646464] text-[#dedede] leading-[20px] border border-[#3c3c3c] flex items-center justify-center'

const NavIcon = ({ children }: { children: ReactNode }) => (
  <Svg className="size-[18px]" box="0 0 18 18">
    {children}
  </Svg>
)
const NavCorner = () => <path d="M18 14v4h-4z" fill="#e8e8e8" />

const StatusBar = () => (
  <div className="flex h-14 bg-[#444] text-xs whitespace-nowrap text-white">
    <div className="mt-[5px] ml-1 flex w-[98px] flex-col gap-px">
      <input
        aria-label="宏录制器"
        className="h-[22px] w-full border-2 border-[#8a8a8a] border-r-white border-b-white bg-[#dcc3c5]"
      />
      <input
        aria-label="侦听器"
        defaultValue="MAXScript 迷你"
        className="h-[23px] w-full border-2 border-[#8a8a8a] border-r-white border-b-white bg-white pr-[6px] pb-1 pl-1 text-[#808080]"
      />
    </div>
    <div className="mt-[3px] ml-[3px] h-[50px] w-[3px] border-x border-[#1c1c1c]" />
    <div className="ml-1 flex flex-col pt-[10px] leading-[18px]">
      <span>选择了 1 个 图形</span>
      <span className="mt-[7px]">单击并拖动以开始创建过程</span>
    </div>

    <div className="ml-auto flex w-[451px] flex-col pt-[7px]">
      <div className="flex h-5 items-center">
        <button aria-label="孤立当前选择" className="w-[27px] pl-1">
          <NavIcon>
            <path d="M2 5V2h3M13 2h3v3M16 13v3h-3M5 16H2v-3" stroke={G} strokeWidth="1.200" />
            <path d="M6 6h6v6H6z" fill={T} />
          </NavIcon>
        </button>
        <button aria-label="选择锁定" className="w-[27px] pl-1">
          <NavIcon>
            <path d="M6 8V5a3 3 0 0 1 6 0v3" stroke="#222" strokeWidth="2" />
            <rect x="4" y="8" width="10" height="8" rx="1" fill="#555" stroke="#222" />
            <path d="M8 10h2v4H8z" fill="#1c1c1c" />
          </NavIcon>
        </button>
        <button aria-label="绝对模式变换输入" className="w-[27px] pl-1">
          <NavIcon>
            <path d="M2 2h14v14H2z" stroke={G} strokeWidth="1.600" />
            <circle cx="9" cy="9" r="3.500" stroke={G} strokeWidth="2" />
            <path d="M9 2v3M9 13v3M2 9h3M13 9h3" stroke={G} strokeWidth="1.600" />
          </NavIcon>
        </button>
        <CoordField axis="X" value="-20.268mm" />
        <CoordField axis="Y" value="-103.791mm" />
        <CoordField axis="Z" value="0.0mm" />
        <span className="ml-[3px] flex items-center gap-[6px]">
          栅格 <span className="text-[10px]">= 10.0mm</span>
        </span>
      </div>
      <div className="mt-[5px] ml-[315px] flex h-5 items-center">
        <button
          aria-label="自适应降级"
          className="flex h-5 w-[21px] items-center justify-center rounded-xs border-l border-[#222] bg-[#5b87c0]"
        >
          <Svg className="size-4" box="0 0 16 16">
            <path
              d="M8 1l6 3.500v7L8 15l-6-3.500v-7zM2 4.500L8 8l6-3.500M8 8v7"
              stroke="#444"
              strokeWidth="3"
            />
            <path
              d="M8 1l6 3.500v7L8 15l-6-3.500v-7zM2 4.500L8 8l6-3.500M8 8v7"
              stroke={G}
              strokeWidth="1.400"
            />
          </Svg>
        </button>
        <button className="ml-1 pt-[3px]">添加时间标记</button>
      </div>
    </div>

    <div className="flex w-[132px] flex-col gap-[2px] pt-[7px]">
      <div className="flex items-center">
        <Cell label="转至开头"><Mini d="M1 3h2v10H1zM9 3v10L4 8zM15 3v10l-5-5z" /></Cell>
        <SepCell />
        <Cell label="上一帧"><Mini d="M7 3v10L1 8zM8 3h2v10H8zM12 3h2v10h-2z" /></Cell>
        <Cell label="播放动画"><Mini d="M2 1l12 7-12 7zM16 12v4h-4z" /></Cell>
        <Cell label="下一帧"><Mini d="M9 3v10l6-5zM2 3h2v10H2zM6 3h2v10H6z" /></Cell>
        <SepCell />
        <Cell label="转至结尾"><Mini d="M13 3h2v10h-2zM7 3v10l5-5zM1 3v10l5-5z" /></Cell>
      </div>
      <div className="flex items-center">
        <Cell label="关键点模式"><Mini d="M7 4v8L2 8zM9 4v8l5-4z" /></Cell>
        <SepCell />
        <div className="relative w-[68px]">
          <input
            aria-label="当前帧"
            defaultValue="0"
            className="h-[17px] w-full border border-[#3a3a3a] bg-[#646464] pl-1 text-[#ddd]"
          />
          <Svg className="absolute top-[4px] right-1 h-[9px] w-[6px]" box="0 0 6 9">
            <path d="M3 0l3 3.500H0zM3 9l3-3.500H0z" fill={G} />
          </Svg>
        </div>
        <SepCell />
        <Cell label="时间配置">
          <Svg className="size-4" box="0 0 16 16">
            <circle cx="6" cy="6" r="5.500" fill={G} />
            <path d="M6 2v4h3" stroke="#444" />
            <circle cx="11.500" cy="11.500" r="4.500" fill="#444" />
            <circle cx="11.500" cy="11.500" r="3" stroke={O} strokeWidth="2" />
          </Svg>
        </Cell>
      </div>
    </div>

    <button
      aria-label="设置关键点"
      className="mt-[7px] flex h-[42px] w-10 items-center justify-center rounded-xs bg-[#646464]"
    >
      <Svg className="size-8" box="0 0 32 32">
        <path d="M14 3v24M2 15h24" stroke="#3a3a3a" strokeWidth="6" />
        <path d="M14 3v24M2 15h24" stroke={G} strokeWidth="4" />
        <circle cx="19" cy="25" r="3.500" stroke={T} strokeWidth="2.400" />
        <path d="M21 23l8-7M26 18l2 3M29 16v4" stroke={T} strokeWidth="2.400" />
      </Svg>
    </button>
    <div className="mt-[7px] ml-[5px] flex w-[65px] flex-col gap-[2px]">
      <button className={keyButton}>自动关键点</button>
      <button className={keyButton}>设置关键点</button>
    </div>
    <div className="mt-[7px] ml-[5px] flex w-[111px] flex-col gap-[4px]">
      <Combo label="选定对象" value="选定对象" className="h-[18px]" />
      <div className="flex gap-[6px]">
        <button aria-label="切线">
          <Svg className="size-5" box="0 0 20 20">
            <path d="M3 5c4 3 4 9 3 13M16 5c-4 3-4 9-3 13" stroke={T} strokeWidth="2" />
            <path d="M2 3h5M12 3h5M8 2h3v3H8z" stroke={G} />
            <path d="M20 16v4h-4z" fill="#e8e8e8" />
          </Svg>
        </button>
        <button className={clsx(keyButton, "grow font-['Noto_Sans_CJK_SC',sans-serif]")}>
          关键点过滤器...
        </button>
      </div>
    </div>
    <div className="mt-[7px] mr-[10px] ml-[13px] grid w-[93px] shrink-0 grid-cols-4 grid-rows-[20px_20px] gap-y-[2px]">
      <Cell label="缩放">
        <NavIcon>
          <circle cx="11" cy="6.500" r="4.800" stroke={G} strokeWidth="1.800" />
          <path d="M8 10l-6 6" stroke={G} strokeWidth="2.600" />
        </NavIcon>
      </Cell>
      <Cell label="缩放所有视图">
        <NavIcon>
          <path d="M8 1h4v4H8zM13 1h4v4h-4zM13 6h4v4h-4z" fill={T} />
          <circle cx="8" cy="9" r="3.500" stroke={G} strokeWidth="1.600" />
          <path d="M6 12l-4 4" stroke={G} strokeWidth="2.400" />
        </NavIcon>
      </Cell>
      <Cell label="最大化显示选定对象">
        <NavIcon>
          <path d="M1 4V1h3M14 1h3v3M1 14v3h3" stroke={G} />
          <path d="M9 3l5 3v6l-5 3-5-3V6z" fill={T} />
          <path d="M4 6l5 2.500L14 6M9 8.500V15" stroke="#2a7475" />
          <NavCorner />
        </NavIcon>
      </Cell>
      <Cell label="所有视图最大化显示">
        <NavIcon>
          <path d="M10 3l3-2 4 2v8l-4 2-3-2z" fill={T} />
          <path d="M1 11l4-3 4 3-4 3zM6 7l3-2v6z" fill={G} />
          <NavCorner />
        </NavIcon>
      </Cell>
      <Cell label="视野">
        <NavIcon>
          <path d="M3 3l12 6-12 6M6 5c3 2 3 6 0 8" stroke={G} strokeWidth="1.600" />
          <NavCorner />
        </NavIcon>
      </Cell>
      <Cell label="平移">
        <NavIcon>
          <path
            d="M6 17l-4-6c-1-2 1-2 2-1l1 1V4c0-1.500 1.500-1.500 1.500 0V2c0-1.500 2-1.500 2 0v1c0-1.500 2-1.500 2 0v2c0-1.500 1.700-1.500 1.700 0v7l-1 5z"
            fill={G}
          />
          <NavCorner />
        </NavIcon>
      </Cell>
      <Cell label="环绕">
        <NavIcon>
          <circle cx="8" cy="8" r="5" fill={T} />
          <path d="M2 15C0 12 13 1 16 3s-6 11-11 11" stroke={G} strokeWidth="2.200" />
          <NavCorner />
        </NavIcon>
      </Cell>
      <Cell label="最大化视口切换">
        <NavIcon>
          <path d="M2 2h14v14H2z" fill={G} />
          <path d="M3 9h6v6H3z" fill={D} />
          <path d="M10 4h4v4M14 4l-5 5" stroke={D} strokeWidth="1.400" />
        </NavIcon>
      </Cell>
    </div>
  </div>
)

type AppProps = { label: string; children: ReactNode; open?: boolean; focused?: boolean }
const TaskApp = ({ label, children, open = false, focused = false }: AppProps) => (
  <button
    aria-label={label}
    className={clsx(
      'relative flex h-full w-[49px] items-center justify-center',
      focused && 'bg-[#50636b]',
    )}
  >
    <svg viewBox="0 0 24 24" className="size-6" fill="none" aria-hidden="true">
      {children}
    </svg>
    {open && (
      <span
        className={clsx(
          'absolute bottom-0 h-[2px] bg-[#76b9ed]',
          focused ? 'inset-x-0' : 'inset-x-1',
        )}
      />
    )}
  </button>
)

const Taskbar = () => (
  <footer className="flex h-10 items-center bg-linear-to-r from-[#213942] via-[#20353f] to-[#1a2740] font-['Noto_Sans','Noto_Sans_CJK_SC',sans-serif] text-white">
    <button aria-label="开始" className="flex h-full w-12 items-center justify-center">
      <Svg className="size-4" box="0 0 16 16">
        <path d="M0 2.300l6.500-1v6.200H0zM7.300 1.200L16 0v7.500H7.300zM0 8.300h6.500v6.200l-6.500-1zM7.300 8.300H16V16l-8.700-1.200z" fill="#fff" />
      </Svg>
    </button>
    <label className="flex h-full w-[344px] items-center border border-[#c8c8c8] bg-[#f1f1f1] pl-[11px] text-[#222]">
      <Svg className="size-[17px]" box="0 0 17 17">
        <circle cx="10.500" cy="6" r="5.200" stroke="#222" strokeWidth="1.200" />
        <path d="M7 10l-6.500 6.500" stroke="#222" strokeWidth="1.200" />
      </Svg>
      <input
        aria-label="搜索"
        placeholder="搜索"
        className="ml-[11px] w-full text-sm outline-none placeholder:text-[#2b2b2b]"
      />
    </label>
    <TaskApp label="Cortana">
      <circle cx="12" cy="12" r="7" stroke="#fff" strokeWidth="2" />
    </TaskApp>
    <TaskApp label="任务视图">
      <path d="M3 4v2.500h10V4M3 20v-2.500h10V20M3 9h10v6H3zM17 4v3M17 12v8" stroke="#fff" strokeWidth="1.300" />
      <path d="M15.500 8h3v3h-3z" fill="#fff" />
    </TaskApp>
    <TaskApp label="Edge" open>
      <defs>
        <linearGradient id="edge" x1="0" y1="0" x2="24" y2="8" gradientUnits="userSpaceOnUse">
          <stop stopColor="#2aa6de" />
          <stop offset=".6" stopColor="#35c6b4" />
          <stop offset="1" stopColor="#63dc5a" />
        </linearGradient>
      </defs>
      <path d="M0 11C1 4 6 0 12 0c7 0 12 5 12 10 0 4-3 6-6 6s-5-1-4-3c2-5-8-9-14-2z" fill="url(#edge)" />
      <path d="M0 12c0-4 6-6 10-4-3 2-3 9 2 12 3 2 7 1 10-1-2 3-6 5-10 5C5 24 0 19 0 12z" fill="#1c6fc9" />
      <path d="M9 11c-3 5 0 12 7 12 3-1 5-2 6-4-5 2-12 0-13-8z" fill="#164f9c" />
    </TaskApp>
    <TaskApp label="文件资源管理器" open>
      <path d="M1 3h8l2 2h12v15H1z" fill="#e5a52b" />
      <path d="M1 7h22v13H1z" fill="#fcd462" />
      <path d="M5 20v-8h13v8h-4v-4H9v4z" fill="#3f8fd6" />
    </TaskApp>
    <TaskApp label="Microsoft Store">
      <path d="M6 6V2h12v4" stroke="#2db2f0" strokeWidth="2" />
      <path d="M1 5h22v16a3 3 0 0 1-3 3H4a3 3 0 0 1-3-3z" fill="#f2f2f2" />
      <path d="M7 10h4.500v4.500H7z" fill="#f25022" />
      <path d="M12.500 10H17v4.500h-4.500z" fill="#7fba00" />
      <path d="M7 15.500h4.500V20H7z" fill="#00a4ef" />
      <path d="M12.500 15.500H17V20h-4.500z" fill="#ffb900" />
    </TaskApp>
    <TaskApp label="3ds Max" open focused>
      <path d="M0 0h24v24H0z" fill="#dff0f0" />
      <path
        d="M8 5c2-3 8-2 8 1.500C16 9 14 10 12 10c3 0 5 1 5 4s-6 5-9 2"
        stroke="#1b8286"
        strokeWidth="3.400"
      />
      <path d="M13 21.500h9" stroke="#1b9a9e" strokeWidth="2" strokeDasharray="2 .6" />
    </TaskApp>
    <TaskApp label="WPS" open>
      <path d="M0 5h9l-1.500 3H5l3 7 4-8h4l4 1 4-3-6 16h-4l-2-6-3 6H8z" fill="#f0301c" />
      <path d="M14 9l2.500 6L19 8z" fill="#203540" />
      <path d="M12 5h5l-5 10-2-4z" fill="#ff5a34" />
    </TaskApp>
    <TaskApp label="Word" open>
      <path d="M6 1h18v6H6z" fill="#41a5ee" />
      <path d="M6 7h18v5H6z" fill="#2b7cd3" />
      <path d="M6 12h18v5H6z" fill="#185abd" />
      <path d="M6 17h18v5H6z" fill="#103f91" />
      <path d="M0 5h12v13H0z" fill="#185abd" />
      <path d="M2.500 8l1.500 7 2-6 2 6 1.500-7" stroke="#fff" strokeWidth="1.500" />
    </TaskApp>

    <div className="relative ml-auto flex h-full items-center text-xs">
      <button className="mr-[10px] text-center leading-[17px]">
        --℃
        <br />
        CPU温度
      </button>
      <button aria-label="显示隐藏的图标" className="flex w-6 justify-center">
        <Svg className="h-[7px] w-3" box="0 0 12 7">
          <path d="M.5 6.500L6 1l5.500 5.500" stroke="#fff" strokeWidth="1.200" />
        </Svg>
      </button>
      <button aria-label="网络" className="flex w-6 justify-center">
        <Svg className="size-4" box="0 0 16 16">
          <path d="M4 3h11.500v8H3V6M9 11v3M6 14h7M.5 1.500h4v4h-4z" stroke="#fff" />
        </Svg>
      </button>
      <button aria-label="音量" className="flex w-6 justify-center">
        <Svg className="size-4" box="0 0 16 16">
          <path d="M.5 6v4H3l3.500 3.500v-11L3 6zM9 6c1 1 1 3 0 4M11 4c2 2 2 6 0 8M13 2c3 3 3 9 0 12" stroke="#fff" />
        </Svg>
      </button>
      <button className="w-6 text-xs">中</button>
      <button aria-label="搜狗输入法" className="ml-[4px] flex w-6 justify-center">
        <Svg className="size-4" box="0 0 16 16">
          <rect x=".5" y=".5" width="15" height="15" rx="3" fill="#f04e16" />
          <path d="M12 4.500C9 3 4.500 3.500 5 6s6.500 1.500 6 4.200-5 2-7 .8" stroke="#fff" strokeWidth="2" />
        </Svg>
      </button>
      <button className="ml-[12px] w-[64px] text-center leading-[18px]">
        10:21
        <br />
        2024/5/11
      </button>
      <button aria-label="通知" className="ml-[11px] flex w-9 justify-center">
        <Svg className="size-[26px]" box="0 0 26 26">
          <path d="M1 2h16v13H8l-4 4v-4H1z" fill="#fff" />
          <path d="M4 6h10M4 9h10" stroke="#1b2840" />
          <circle cx="17" cy="18" r="7.500" fill="#333c49" stroke="#8a929e" />
          <path d="M15.500 16l2-1.500V22" stroke="#fff" strokeWidth="1.400" />
        </Svg>
      </button>
      <div className="mr-1 ml-[5px] h-full w-px bg-[#6c7786]" />
      <span className="pointer-events-none absolute right-[16px] text-[17px] whitespace-nowrap text-white/50 font-['Liberation_Sans','Noto_Sans_CJK_SC',sans-serif]">
        CSDN @刘一哥GIS
      </span>
    </div>
  </footer>
)

export default function App() {
  return (
    <div className="flex min-h-screen flex-col bg-[#444] font-['Liberation_Mono','Noto_Sans_CJK_SC',monospace]">
      <TitleBar />
      <MenuBar />
      <Toolbar />
      <Ribbon />
      <div className="flex grow">
        <SceneExplorer />
        <Viewports />
        <CommandPanel />
      </div>
      <StatusBar />
      <Taskbar />
    </div>
  )
}
